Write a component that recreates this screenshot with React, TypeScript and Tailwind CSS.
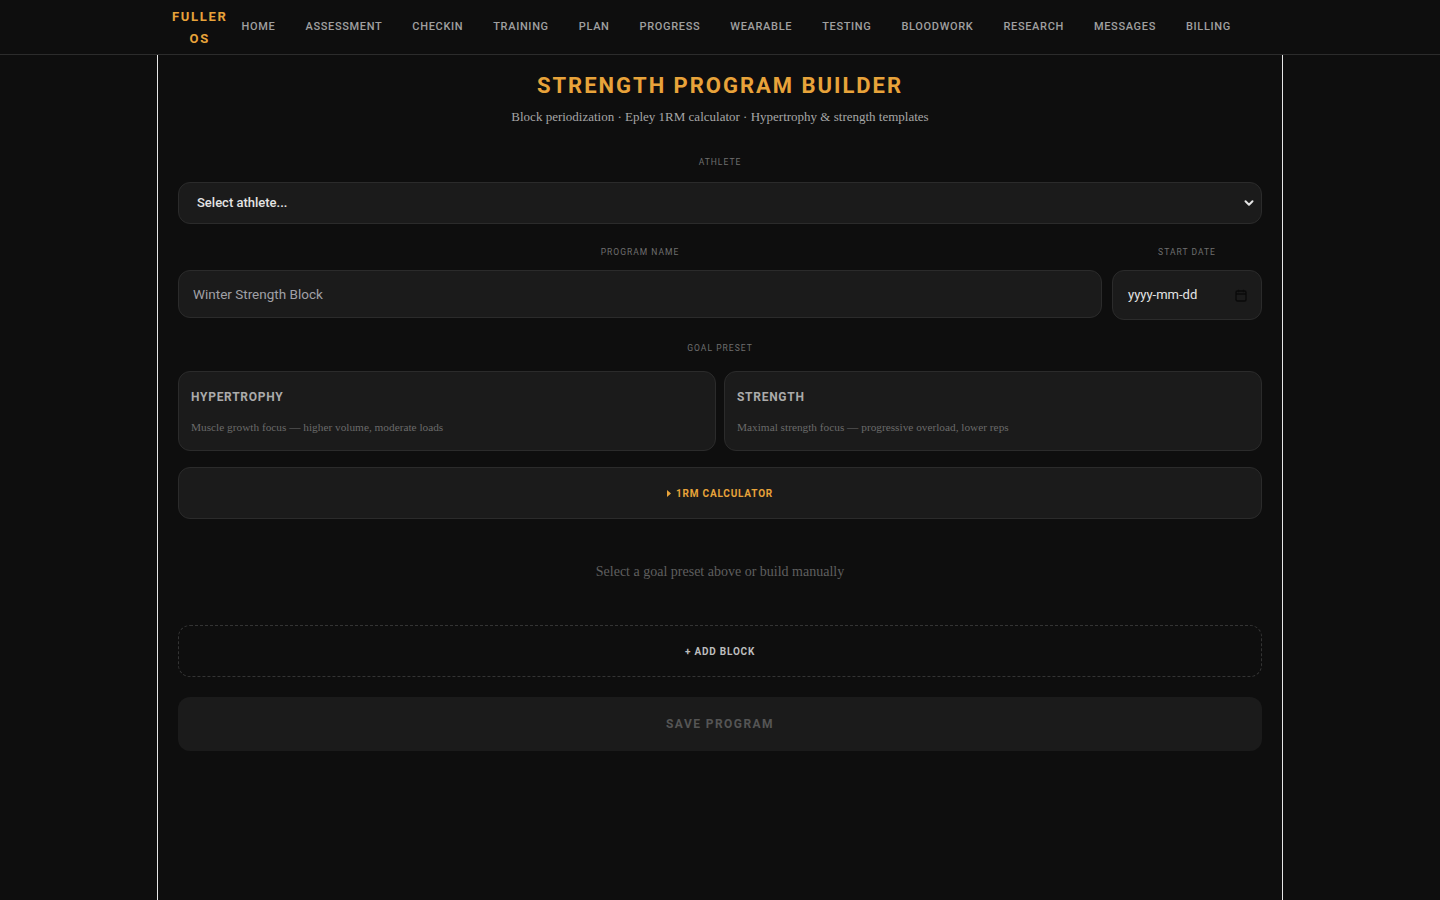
import React from "react";

const NAV = [
  "HOME",
  "ASSESSMENT",
  "CHECKIN",
  "TRAINING",
  "PLAN",
  "PROGRESS",
  "WEARABLE",
  "TESTING",
  "BLOODWORK",
  "RESEARCH",
  "MESSAGES",
  "BILLING",
];

const PRESETS = [
  { name: "HYPERTROPHY", desc: "Muscle growth focus — higher volume, moderate loads" },
  { name: "STRENGTH", desc: "Maximal strength focus — progressive overload, lower reps" },
];

const head = "font-['Roboto','Liberation_Sans',sans-serif]";
const serif = "font-['Liberation_Serif','DejaVu_Serif',serif]";

function Label({ children, className = "" }: { children: React.ReactNode; className?: string }) {
  return (
    <div
      className={`${head} text-center text-[8.5px] leading-[12px] tracking-[0.12em] text-[#6f6f6f] ${className}`}
    >
      {children}
    </div>
  );
}

export default function App() {
  return (
    <div className="min-h-screen bg-[#0e0e0e]">
      {/* top nav */}
      <header className="h-[55px] border-b border-[#2c2c2c]">
        <nav className={`${head} mx-auto flex h-full w-[1126px] items-center px-[15px] pt-px`}>
          <div className="mr-[14px] flex flex-col items-center text-[13px] font-bold leading-[22px] tracking-[0.13em] text-[#e8a33a]">
            <span>FULLER</span>
            <span>OS</span>
          </div>
          <div className="flex items-center gap-[30px]">
            {NAV.map((item) => (
              <a
                key={item}
                className="text-[11px] font-medium tracking-[0.06em] text-[#a0a0a0]"
              >
                {item}
              </a>
            ))}
          </div>
        </nav>
      </header>

      {/* page */}
      <main className="mx-auto min-h-[845px] w-[1126px] border-x border-[#e6e6e6] px-5 pt-4">
        <h1
          className={`${head} text-center text-[22px] font-bold leading-[30px] tracking-[0.09em] text-[#e8a33a]`}
        >
          STRENGTH PROGRAM BUILDER
        </h1>
        <p className={`${serif} mt-[6px] text-center text-[13px] leading-[20px] text-[#a6a6a6]`}>
          Block periodization · Epley 1RM calculator · Hypertrophy &amp; strength templates
        </p>

        <Label className="mt-[29px]">ATHLETE</Label>
        <div className="mt-[14px] flex h-[42px] items-center justify-between rounded-xl border border-[#2b2b2b] bg-[#1b1b1b] pl-[18px] pr-[6px]">
          <span className={`${head} text-[13px] font-medium text-[#e4e4e4]`}>Select athlete...</span>
          <svg width="12" height="12" viewBox="0 0 12 12" fill="none">
            <path d="M2.5 4.2 6 7.7l3.5-3.5" stroke="#e4e4e4" strokeWidth="2" strokeLinecap="round" strokeLinejoin="round" />
          </svg>
        </div>

        <div className="mt-[22px] flex gap-[10px]">
          <div className="flex-1">
            <Label>PROGRAM NAME</Label>
            <div className="mt-[12px] flex h-[48px] items-center rounded-xl border border-[#2b2b2b] bg-[#1b1b1b] px-[14px]">
              <span className={`${head} text-[13.5px] text-[#a0a0a6]`}>Winter Strength Block</span>
            </div>
          </div>
          <div className="w-[150px]">
            <Label>START DATE</Label>
            <div className="mt-[12px] flex h-[50px] items-center justify-between rounded-xl border border-[#2b2b2b] bg-[#1b1b1b] pl-[15px] pr-[14px]">
              <span className={`${head} text-[13px] text-[#e4e4e4]`}>yyyy-mm-dd</span>
              <svg width="12" height="13" viewBox="0 0 12 13" fill="none">
                <rect x="1" y="2" width="10" height="10" rx="1.5" stroke="#0a0a0a" strokeWidth="1.4" />
                <path d="M1 5h10" stroke="#0a0a0a" strokeWidth="1.4" />
                <path d="M3.5 0.8v2.4M8.5 0.8v2.4" stroke="#0a0a0a" strokeWidth="1.2" />
              </svg>
            </div>
          </div>
        </div>

        <Label className="mt-[22px]">GOAL PRESET</Label>
        <div className="mt-[17px] grid grid-cols-2 gap-2">
          {PRESETS.map((p) => (
            <div
              key={p.name}
              className="h-[80px] rounded-xl border border-[#2b2b2b] bg-[#1b1b1b] px-3 pt-[17px]"
            >
              <div className={`${head} text-[12px] font-bold leading-[16px] tracking-[0.06em] text-[#ababab]`}>
                {p.name}
              </div>
              <div className={`${serif} mt-[15px] text-[11.3px] leading-[14px] text-[#6a6a6a]`}>
                {p.desc}
              </div>
            </div>
          ))}
        </div>

        <button className="mt-4 flex h-[52px] w-full items-center justify-center gap-[5px] rounded-xl border border-[#2b2b2b] bg-[#1b1b1b]">
          <svg width="4" height="7" viewBox="0 0 4 7">
            <path d="M0 0l4 3.5L0 7z" fill="#e8a33a" />
          </svg>
          <span className={`${head} text-[10px] font-bold tracking-[0.08em] text-[#e8a33a]`}>
            1RM CALCULATOR
          </span>
        </button>

        <p className={`${serif} mt-[43px] text-center text-[14px] leading-[20px] text-[#5f5f5f]`}>
          Select a goal preset above or build manually
        </p>

        <button className="mt-[43px] flex h-[52px] w-full items-center justify-center rounded-xl border border-dashed border-[#343434]">
          <span className={`${head} text-[10px] font-bold tracking-[0.08em] text-[#bdbdbd]`}>+ ADD BLOCK</span>
        </button>

        <button className="mt-5 flex h-[54px] w-full items-center justify-center rounded-xl bg-[#1b1b1b]">
          <span className={`${head} text-[12px] font-bold tracking-[0.12em] text-[#555555]`}>SAVE PROGRAM</span>
        </button>
      </main>
    </div>
  );
}
